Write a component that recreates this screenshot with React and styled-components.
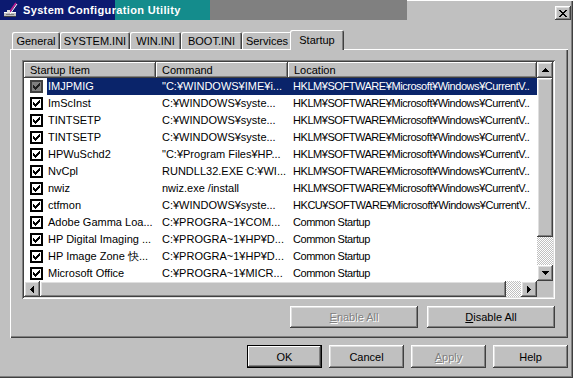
import React from "react";
import styled, { createGlobalStyle, css } from "styled-components";

const GlobalStyle = createGlobalStyle`
  html, body { margin: 0; padding: 0; background: #ffffff; }
  body { font-family: "Liberation Sans", Arial, sans-serif; font-size: 11px; color: #000; }
  #root { width: 575px; height: 384px; overflow: hidden; }
  * { box-sizing: border-box; }
`;

const raised = css`
  box-shadow: inset -1px -1px #404040, inset 1px 1px #ffffff, inset -2px -2px #808080, inset 2px 2px #dfdfdf;
`;

const Screen = styled.div`
  width: 575px;
  height: 384px;
  background: #ffffff;
`;

const Window = styled.div`
  width: 573px;
  height: 378px;
  background: #c0c0c0;
  display: flex;
  flex-direction: column;
  box-shadow: inset -1px -1px #404040, inset -2px -2px #808080;
`;

const TitleBar = styled.div`
  height: 20px;
  display: flex;
  align-items: flex-start;
  box-shadow: inset 0 1px #ffffff;
`;

const TitleFill = styled.div`
  width: 407px;
  height: 20px;
  display: flex;
  align-items: center;
  gap: 4px;
  padding-left: 3px;
  background: linear-gradient(to right, #0c1a70 0 115px, #148c8c 115px 210px, #808080 210px 407px);
  color: #ffffff;
  font-weight: bold;
  font-size: 11px;
  letter-spacing: 0.35px;
  white-space: nowrap;
`;

const Spacer = styled.div`
  flex: 1;
`;

const CloseButton = styled.div`
  width: 16px;
  height: 14px;
  margin: 6px 2px 0 0;
  display: flex;
  align-items: center;
  justify-content: center;
  background: #c0c0c0;
  ${raised}
`;

const Body = styled.div`
  flex: 1;
  display: flex;
  flex-direction: column;
  padding: 0 5px 0 10px;
`;

const TabStrip = styled.div`
  height: 20px;
  margin-top: 10px;
  margin-bottom: -1px;
  padding-left: 2px;
  display: flex;
  align-items: flex-end;
  position: relative;
  z-index: 1;
`;

const Tab = styled.div`
  width: ${(p) => p.$w}px;
  height: ${(p) => (p.$active ? 20 : 17)}px;
  margin: ${(p) => (p.$active ? "0 -2px 0 -2px" : "0 0 1px 0")};
  background: #c0c0c0;
  display: flex;
  align-items: center;
  justify-content: center;
  white-space: nowrap;
  border-radius: 2px 2px 0 0;
  position: relative;
  z-index: ${(p) => (p.$active ? 2 : 1)};
  box-shadow: inset 1px 1px #ffffff, inset -1px 0 #404040, inset -2px 0 #808080;
`;

const Panel = styled.div`
  height: 289px;
  padding: 11px 13px 10px 12px;
  display: flex;
  flex-direction: column;
  box-shadow: inset 1px 1px #ffffff, inset -1px -1px #404040, inset -2px -2px #808080;
`;

const ListView = styled.div`
  width: 533px;
  height: 239px;
  padding: 2px;
  background: #ffffff;
  display: grid;
  grid-template-columns: 1fr 16px;
  grid-template-rows: 1fr 16px;
  box-shadow: inset 1px 1px #808080, inset -1px -1px #ffffff, inset 2px 2px #404040, inset -2px -2px #dfdfdf;
`;

const ListArea = styled.div`
  overflow: hidden;
  display: flex;
  flex-direction: column;
  min-width: 0;
  min-height: 0;
`;

const cols = css`
  display: grid;
  grid-template-columns: 132px 132px 1fr;
`;

const Header = styled.div`
  ${cols}
  height: 16px;
  flex: none;
`;

const HeaderCell = styled.div`
  background: #c0c0c0;
  padding-left: 6px;
  line-height: 16px;
  white-space: nowrap;
  overflow: hidden;
  box-shadow: inset -1px -1px #404040, inset 1px 1px #ffffff, inset -2px -2px #808080;
`;

const Row = styled.div`
  ${cols}
  height: 17px;
  flex: none;
`;

const ItemCell = styled.div`
  display: flex;
  align-items: center;
  padding-left: 6px;
  min-width: 0;
`;

const Label = styled.div`
  flex: 1;
  margin-left: 4px;
  padding-left: 1px;
  line-height: 17px;
  white-space: nowrap;
  overflow: hidden;
  background: ${(p) => (p.$sel ? "#0a246a" : "transparent")};
  color: ${(p) => (p.$sel ? "#ffffff" : "#000000")};
`;

const TextCell = styled.div`
  padding-left: ${(p) => p.$pad}px;
  line-height: 17px;
  white-space: nowrap;
  overflow: hidden;
  letter-spacing: ${(p) => p.$ls || 0}px;
  background: ${(p) => (p.$sel ? "#0a246a" : "transparent")};
  color: ${(p) => (p.$sel ? "#ffffff" : "#000000")};
`;

const VScroll = styled.div`
  display: flex;
  flex-direction: column;
  min-height: 0;
`;

const HScroll = styled.div`
  display: flex;
  min-width: 0;
`;

const ArrowButton = styled.div`
  width: 16px;
  height: 16px;
  flex: none;
  background: #c0c0c0;
  display: flex;
  align-items: center;
  justify-content: center;
  ${raised}
`;

const Thumb = styled.div`
  flex: none;
  width: ${(p) => (p.$w ? `${p.$w}px` : "16px")};
  height: ${(p) => (p.$h ? `${p.$h}px` : "16px")};
  background: #c0c0c0;
  ${raised}
`;

const Track = styled.div`
  flex: 1;
  background: repeating-conic-gradient(#c0c0c0 0 25%, #ffffff 0 50%) 0 0 / 2px 2px;
`;

const Corner = styled.div`
  background: #c0c0c0;
`;

const ButtonRow = styled.div`
  display: flex;
  justify-content: flex-end;
  gap: ${(p) => p.$gap}px;
  margin-top: 7px;
`;

const Button = styled.div`
  width: ${(p) => p.$w}px;
  height: ${(p) => p.$h}px;
  background: #c0c0c0;
  display: flex;
  align-items: center;
  justify-content: center;
  white-space: nowrap;
  color: ${(p) => (p.$disabled ? "#808080" : "#000000")};
  text-shadow: ${(p) => (p.$disabled ? "1px 1px #ffffff" : "none")};
  box-shadow: ${(p) =>
    p.$default
      ? "inset 0 0 0 1px #000000, inset -2px -2px #404040, inset 2px 2px #ffffff, inset -3px -3px #808080"
      : "inset -1px -1px #404040, inset 1px 1px #ffffff, inset -2px -2px #808080, inset 2px 2px #dfdfdf"};
  u { text-decoration: underline; }
`;

function Pixels({ pattern, color, x = 0, y = 0 }) {
  const rects = [];
  pattern.forEach((line, r) => {
    for (let c = 0; c < line.length; c++) {
      if (line[c] === "#") rects.push(<rect key={`${r}-${c}`} x={x + c} y={y + r} width={1} height={1} fill={color} />);
    }
  });
  return <>{rects}</>;
}

const CHECK = [
  "......#",
  ".....##",
  "#...###",
  "##.###.",
  "#####..",
  ".###...",
  "..#....",
];

function CheckBox({ sel }) {
  return (
    <svg width="13" height="13" shapeRendering="crispEdges" style={{ flex: "none" }}>
      <rect x="0" y="0" width="13" height="13" fill={sel ? "#404040" : "#000000"} />
      <rect x="2" y="2" width="9" height="9" fill={sel ? "#808080" : "#ffffff"} />
      <Pixels pattern={CHECK} color={sel ? "#202020" : "#000000"} x={3} y={3} />
    </svg>
  );
}

const CLOSE_X = [
  "##....##",
  ".##..##.",
  "..####..",
  "...##...",
  "..####..",
  ".##..##.",
  "##....##",
];

function Arrow({ dir }) {
  const d = {
    up: "M3 0h1v1h1v1h1v1h1v1H0V3h1V2h1V1h1z",
    down: "M0 0h7v1H6v1H5v1H4v1H3V3H2V2H1V1H0z",
    left: "M3 0h1v7H3V6H2V5H1V4H0V3h1V2h1V1h1z",
    right: "M0 0h1v1h1v1h1v1h1v1H3v1H2v1H1v1H0z",
  }[dir];
  const vertical = dir === "up" || dir === "down";
  return (
    <svg width={vertical ? 7 : 4} height={vertical ? 4 : 7} shapeRendering="crispEdges">
      <path d={d} fill="#000000" />
    </svg>
  );
}

function AppIcon() {
  return (
    <svg width="16" height="16" viewBox="0 0 16 16" shapeRendering="crispEdges" style={{ flex: "none" }}>
      <rect x="1" y="10" width="12" height="4" fill="#c0c0c0" />
      <rect x="1" y="10" width="12" height="1" fill="#ffffff" />
      <rect x="1" y="14" width="12" height="1" fill="#404040" />
      <rect x="3" y="12" width="8" height="1" fill="#808080" />
      <path d="M13 1 L6 11" stroke="#c02090" strokeWidth="1.6" shapeRendering="auto" />
      <path d="M14 2 L7 12" stroke="#ffffff" strokeWidth="1" shapeRendering="auto" />
      <rect x="4" y="8" width="3" height="3" fill="#e0e0e0" />
    </svg>
  );
}

const tabs = [
  { label: "General", w: 48 },
  { label: "SYSTEM.INI", w: 70 },
  { label: "WIN.INI", w: 51 },
  { label: "BOOT.INI", w: 61 },
  { label: "Services", w: 50 },
  { label: "Startup", w: 54, active: true },
];

const HKLM = "HKLM¥SOFTWARE¥Microsoft¥Windows¥CurrentV..";
const rows = [
  ["IMJPMIG", "\"C:¥WINDOWS¥IME¥i...", HKLM],
  ["ImScInst", "C:¥WINDOWS¥syste...", HKLM],
  ["TINTSETP", "C:¥WINDOWS¥syste...", HKLM],
  ["TINTSETP", "C:¥WINDOWS¥syste...", HKLM],
  ["HPWuSchd2", "\"C:¥Program Files¥HP...", HKLM],
  ["NvCpl", "RUNDLL32.EXE C:¥WI...", HKLM],
  ["nwiz", "nwiz.exe /install", HKLM],
  ["ctfmon", "C:¥WINDOWS¥syste...", "HKCU¥SOFTWARE¥Microsoft¥Windows¥CurrentV.."],
  ["Adobe Gamma Loa...", "C:¥PROGRA~1¥COM...", "Common Startup"],
  ["HP Digital Imaging ...", "C:¥PROGRA~1¥HP¥D...", "Common Startup"],
  ["HP Image Zone 快...", "C:¥PROGRA~1¥HP¥D...", "Common Startup"],
  ["Microsoft Office", "C:¥PROGRA~1¥MICR...", "Common Startup"],
];

export default function App() {
  return (
    <Screen>
      <GlobalStyle />
      <Window>
        <TitleBar>
          <TitleFill>
            <AppIcon />
            <span>System Configuration Utility</span>
          </TitleFill>
          <Spacer />
          <CloseButton>
            <svg width="8" height="7" shapeRendering="crispEdges">
              <Pixels pattern={CLOSE_X} color="#000000" />
            </svg>
          </CloseButton>
        </TitleBar>
        <Body>
          <TabStrip>
            {tabs.map((t) => (
              <Tab key={t.label} $w={t.w} $active={t.active}>
                {t.label}
              </Tab>
            ))}
          </TabStrip>
          <Panel>
            <ListView>
              <ListArea>
                <Header>
                  <HeaderCell>Startup Item</HeaderCell>
                  <HeaderCell>Command</HeaderCell>
                  <HeaderCell>Location</HeaderCell>
                </Header>
                {rows.map((r, i) => {
                  const sel = i === 0;
                  return (
                    <Row key={i}>
                      <ItemCell>
                        <CheckBox sel={sel} />
                        <Label $sel={sel}>{r[0]}</Label>
                      </ItemCell>
                      <TextCell $pad={6} $sel={sel}>{r[1]}</TextCell>
                      <TextCell $pad={5} $ls={-0.45} $sel={sel}>{r[2]}</TextCell>
                    </Row>
                  );
                })}
              </ListArea>
              <VScroll>
                <ArrowButton><Arrow dir="up" /></ArrowButton>
                <Thumb $h={159} />
                <Track />
                <ArrowButton><Arrow dir="down" /></ArrowButton>
              </VScroll>
              <HScroll>
                <ArrowButton><Arrow dir="left" /></ArrowButton>
                <Thumb $w={466} />
                <Track />
                <ArrowButton><Arrow dir="right" /></ArrowButton>
              </HScroll>
              <Corner />
            </ListView>
            <ButtonRow $gap={9}>
              <Button $w={128} $h={22} $disabled>
                <span><u>E</u>nable All</span>
              </Button>
              <Button $w={128} $h={22}>
                <span><u>D</u>isable All</span>
              </Button>
            </ButtonRow>
          </Panel>
          <ButtonRow $gap={7}>
            <Button $w={75} $h={23} $default>OK</Button>
            <Button $w={75} $h={23}>Cancel</Button>
            <Button $w={75} $h={23} $disabled>
              <span><u>A</u>pply</span>
            </Button>
            <Button $w={75} $h={23}>Help</Button>
          </ButtonRow>
        </Body>
      </Window>
    </Screen>
  );
}
